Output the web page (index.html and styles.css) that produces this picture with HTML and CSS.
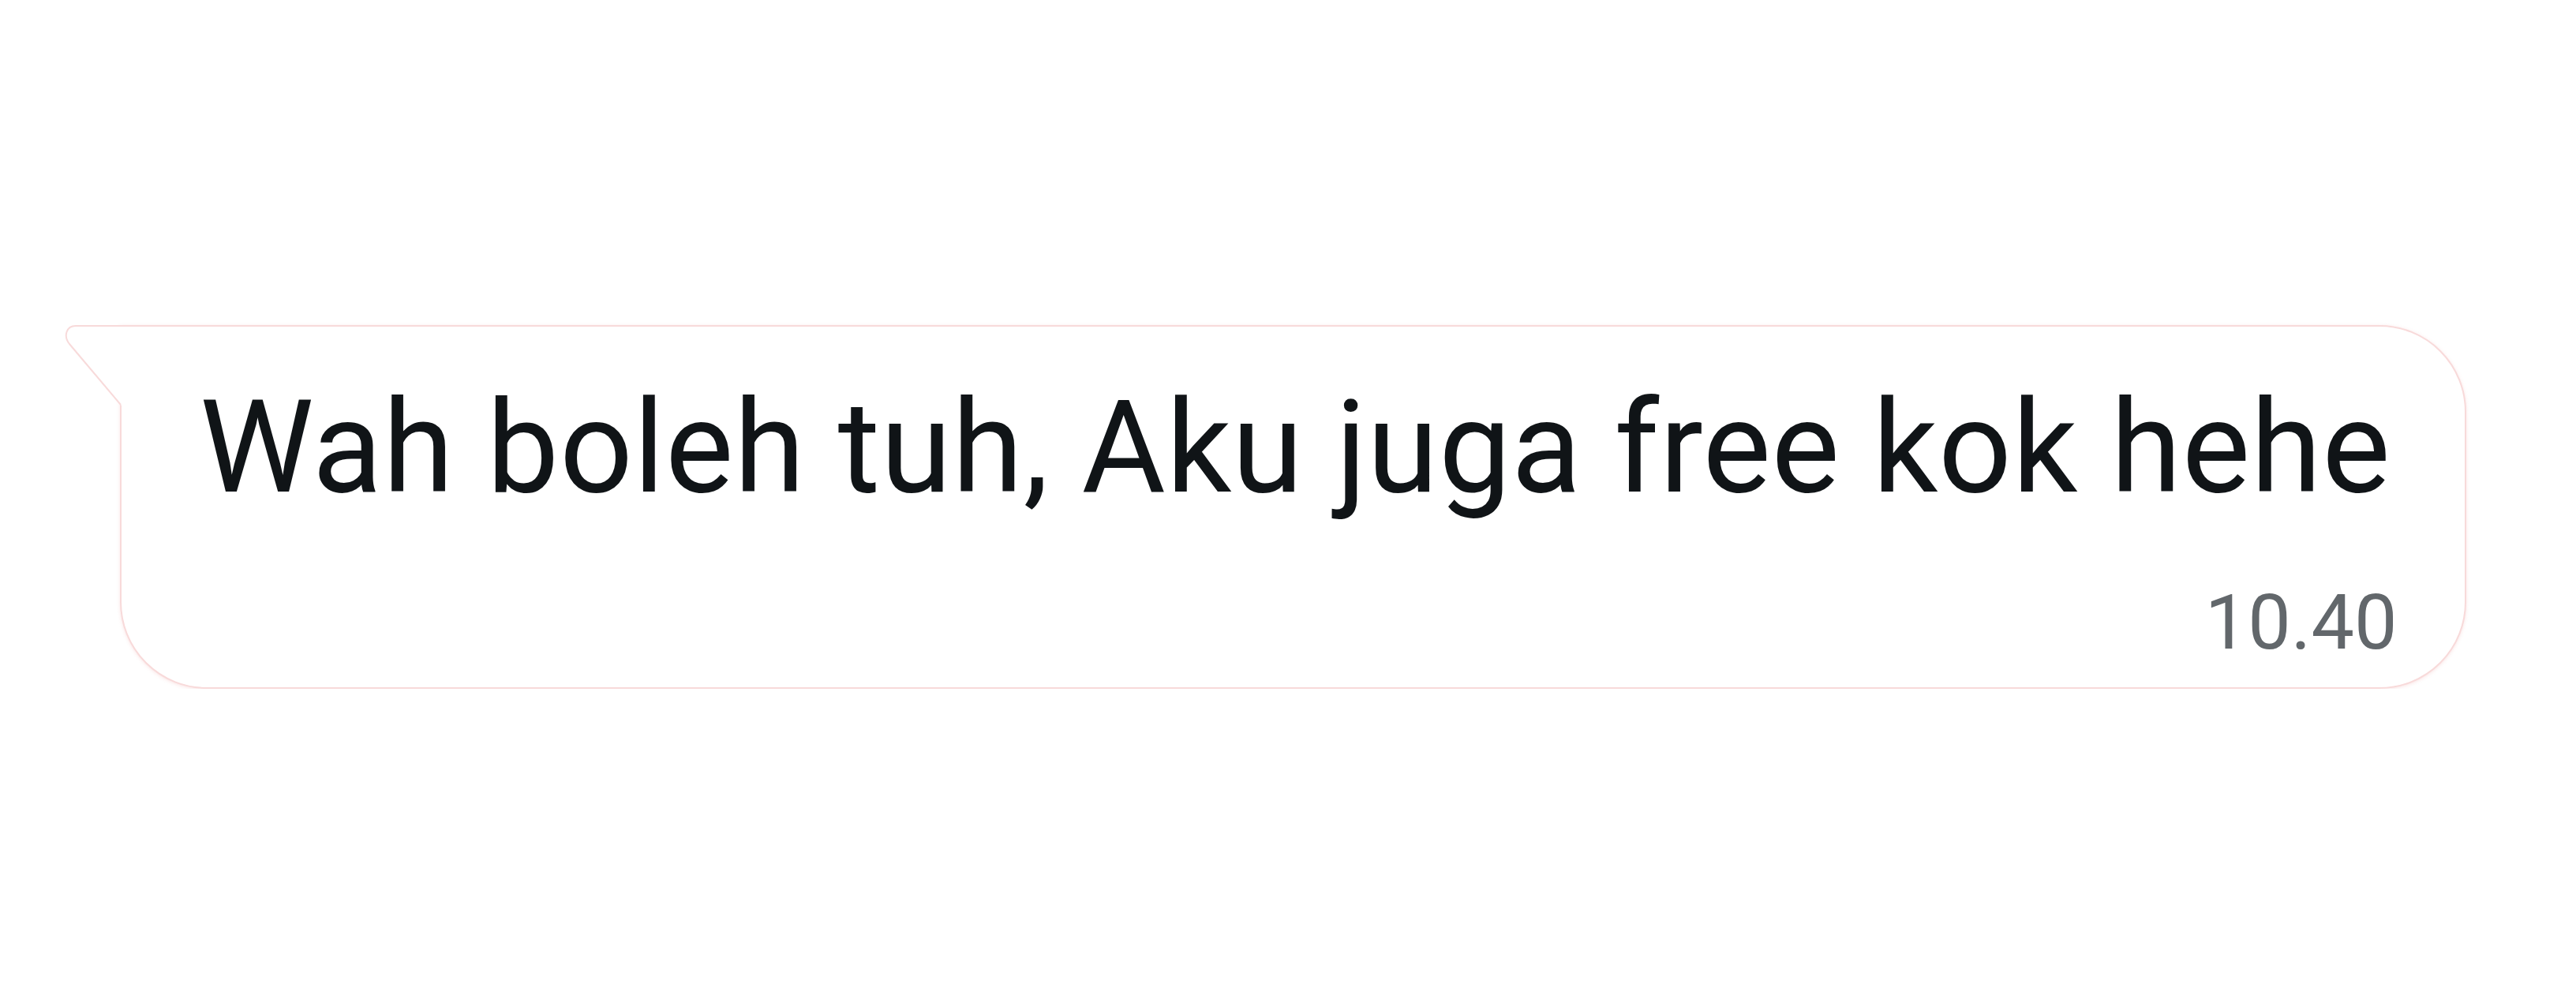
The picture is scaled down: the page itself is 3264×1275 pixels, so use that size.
FILE: index.html
```html
<!DOCTYPE html>
<html lang="id">
<head>
<meta charset="utf-8">
<title>Chat bubble</title>
<link rel="stylesheet" href="styles.css">
</head>
<body>
<main class="page">
  <div class="bubble">
    <svg class="tail" width="84" height="110" viewBox="0 0 84 110" aria-hidden="true">
      <path class="tail-fill" d="M82,2 H18 C6,2 2,14 10,24 L76,102 L82,102 Z"/>
      <path class="tail-line" d="M80,1 H18 C6,1 2,14 10,24 L75,101"/>
    </svg>
    <p class="message">Wah boleh tuh, Aku juga free kok hehe</p>
    <span class="time">10.40</span>
  </div>
</main>
</body>
</html>
```
FILE: styles.css
```css
html, body {
  margin: 0;
  background: #ffffff;
}
.page {
  display: flex;
  align-items: flex-start;
  padding: 412px 0 0 152px;
  font-family: Roboto, "Noto Sans", sans-serif;
}
.bubble {
  position: relative;
  display: flex;
  flex-direction: column;
  background: #ffffff;
  border: 2px solid #f8dada;
  border-radius: 0 110px 110px 110px;
  box-shadow: 0 1px 4px rgba(240, 170, 170, 0.3);
  padding: 58px 86px 25px 99px;
}
.tail {
  position: absolute;
  left: -76px;
  top: -2px;
  overflow: visible;
}
.tail-fill {
  fill: #ffffff;
}
.tail-line {
  fill: none;
  stroke: #f8dada;
  stroke-width: 2;
}
.message {
  margin: 0 8px 0 0;
  font-size: 163px;
  line-height: 191px;
  letter-spacing: 0.7px;
  color: #101417;
  white-space: nowrap;
}
.time {
  align-self: flex-end;
  margin-top: 69px;
  font-size: 97px;
  line-height: 114px;
  color: #62676b;
}
```
